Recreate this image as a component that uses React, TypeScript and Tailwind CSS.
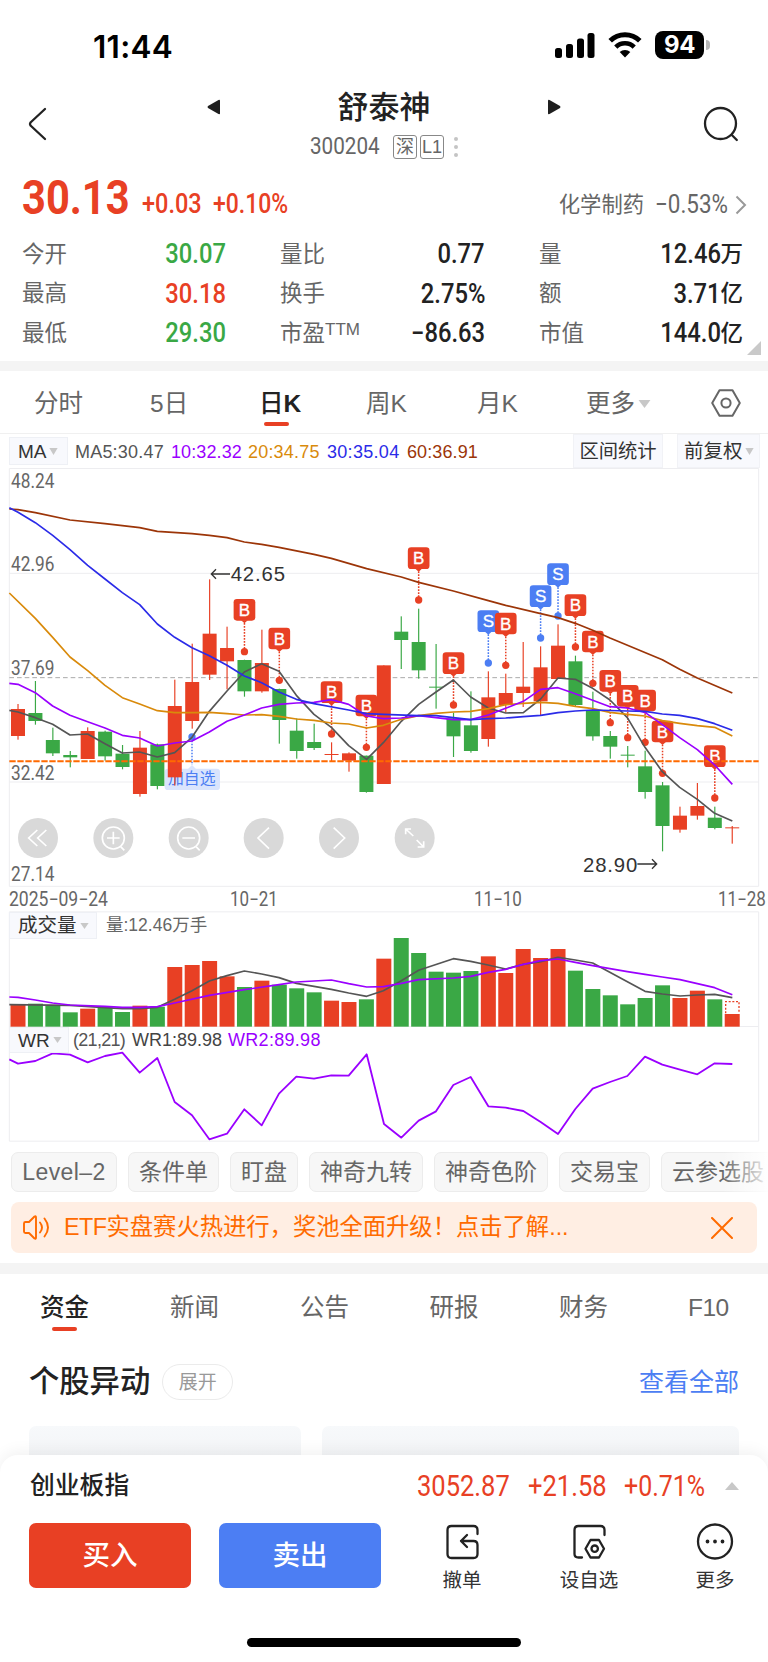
import type { ReactNode } from "react";

const RED = "#e84024";
const GREEN = "#3aa845";
const BLUE = "#4c7ef3";
const GRAY = "#555555";
const PURPLE = "#9a00ff";
const AMBER = "#d98a0b";
const NAVY = "#2b2be8";
const BROWN = "#9c3508";

const CJK = "font-['Liberation_Sans','Noto_Sans_CJK_SC',sans-serif]";
const SVG_SANS = "'Liberation Sans','Noto Sans CJK SC',sans-serif";

const STEP = 52.26;
const cx = (i: number) => 54 + STEP * i;

// high, body top, body bottom, low, 1 = rising
const candles: number[][] = [
  [732, 747, 828, 839, 1], [663, 759, 783, 794, 0], [803, 840, 880, 888, 0], [873, 885, 892, 922, 0],
  [802, 813, 897, 897, 1], [812, 815, 889, 902, 0], [855, 881, 921, 928, 0], [813, 863, 1002, 1010, 1],
  [851, 853, 978, 988, 0], [659, 738, 952, 977, 1], [551, 666, 783, 806, 1], [358, 521, 644, 660, 1],
  [500, 564, 604, 688, 1], [599, 600, 694, 710, 0], [509, 609, 694, 698, 1], [686, 687, 780, 851, 0],
  [775, 812, 873, 896, 0], [791, 846, 864, 870, 0], [847, 882, 885, 903, 1], [877, 880, 902, 935, 1],
  [887, 887, 996, 998, 0], [616, 616, 972, 972, 1], [469, 515, 540, 627, 0], [446, 546, 631, 656, 0],
  [552, 680, 683, 746, 0], [758, 775, 829, 891, 0], [694, 796, 873, 878, 0], [634, 712, 837, 860, 1],
  [641, 699, 735, 757, 1], [546, 680, 699, 741, 1], [559, 622, 724, 767, 1], [493, 557, 657, 657, 1],
  [587, 604, 735, 738, 0], [695, 752, 829, 842, 0], [813, 828, 860, 896, 0], [858, 884, 887, 922, 0],
  [872, 919, 996, 1016, 0], [966, 976, 1098, 1174, 0], [1040, 1067, 1109, 1118, 1], [969, 1038, 1067, 1079, 1],
  [1040, 1073, 1104, 1108, 0], [1098, 1102, 1105, 1151, 1],
];

const volumes = [
  375, 371, 377, 397, 386, 382, 396, 377, 380, 261, 255, 243, 289, 321, 302, 314, 325, 337, 362, 366, 358,
  236, 174, 219, 275, 278, 273, 229, 279, 207, 234, 207, 272, 327, 346, 373, 354, 316, 354, 332, 358, 402,
];

const trades: [number, number, "B" | "S"][] = [
  [13, 417, "B"], [15, 503, "B"], [18, 664, "B"], [20, 704, "B"], [23, 262, "B"], [25, 577, "B"],
  [27, 451, "S"], [28, 458, "B"], [30, 376, "S"], [31, 310, "S"], [32, 403, "B"], [33, 512, "B"],
  [34, 630, "B"], [35, 675, "B"], [36, 689, "B"], [37, 782, "B"], [40, 856, "B"],
];

const MA60 = "28,147 54,149 106,158 210,180 315,191 419,203 472,214 576,221 628,226 681,233 733,246 785,253 837,262 942,283 994,295 1100,326 1204,351 1256,367 1360,393 1465,422 1517,436 1622,461 1674,473 1726,490 1778,511 1830,534 1987,599 2039,628 2092,654 2197,699";
const MA30 = "28,143 54,157 106,188 158,226 210,269 263,316 315,357 367,398 419,434 472,492 524,532 576,563 628,587 681,616 733,648 785,668 837,696 889,718 942,731 1046,750 1100,761 1150,763 1256,767 1308,767 1360,773 1412,779 1465,776 1517,774 1570,770 1622,766 1674,758 1726,753 1778,750 1882,753 1935,754 1987,762 2039,766 2092,776 2144,791 2197,811";
const MA20 = "28,399 106,475 158,532 210,591 263,632 315,676 367,713 419,732 472,752 524,758 576,758 628,757 681,761 733,765 785,764 837,769 889,777 942,781 994,789 1046,792 1100,804 1150,796 1204,778 1256,767 1308,760 1360,756 1412,754 1465,746 1517,734 1570,730 1622,727 1674,730 1726,739 1778,746 1830,757 1882,763 1935,768 1987,782 2039,790 2092,797 2144,802 2197,828";
const MA10 = "28,670 54,673 106,698 158,738 210,766 263,785 315,804 367,826 419,834 472,858 524,849 576,843 628,816 681,784 733,765 785,744 837,733 889,729 942,727 994,719 1046,733 1100,768 1150,776 1204,774 1256,767 1308,773 1360,779 1412,779 1465,765 1517,745 1570,724 1622,688 1674,683 1726,701 1778,721 1830,740 1882,744 1935,757 1987,794 2039,833 2092,869 2144,915 2197,973";
const MA5 = "28,751 54,756 106,773 158,793 210,825 263,822 315,851 367,879 419,876 472,891 524,878 576,832 628,754 681,693 733,636 785,611 837,634 889,706 942,763 994,802 1046,857 1100,898 1150,848 1204,784 1256,733 1308,696 1360,660 1412,711 1465,744 1517,759 1570,758 1622,717 1674,654 1726,658 1778,685 1830,720 1882,773 1935,862 1987,935 2039,982 2092,1018 2144,1060 2197,1083";
const VMA5 = "28,374 210,376 315,383 367,386 419,386 472,382 524,358 576,332 628,303 681,287 733,273 785,282 837,293 889,310 942,319 994,328 1046,339 1100,349 1150,332 1204,302 1256,271 1360,236 1412,244 1464,255 1517,267 1570,253 1622,245 1674,232 1726,240 1778,249 1935,334 1987,342 2040,348 2092,345 2144,343 2197,353";
const VMA10 = "28,351 54,352 106,360 158,369 210,375 315,379 367,382 419,382 472,380 524,369 628,346 733,329 837,314 889,306 942,303 994,300 1046,311 1100,321 1150,320 1204,310 1256,299 1360,294 1412,289 1465,277 1517,268 1570,253 1622,242 1674,237 1726,247 1778,257 1830,266 1882,275 1935,283 1987,291 2040,299 2092,311 2144,323 2197,344";
const WR = "28,538 54,551 106,543 158,520 210,524 263,547 315,528 367,518 419,578 472,534 524,666 576,706 628,778 681,761 733,688 785,736 837,641 889,590 942,596 994,586 1046,587 1100,523 1152,732 1204,773 1256,722 1308,694 1360,615 1412,591 1465,679 1517,683 1570,693 1622,726 1674,762 1726,687 1778,626 1830,606 1882,588 1935,530 1987,554 2040,569 2092,583 2144,550 2197,552";

function Line({ points, color, width = 5 }: { points: string; color: string; width?: number }) {
  return <polyline points={points} fill="none" stroke={color} strokeWidth={width} strokeLinejoin="round" />;
}

function Caret({ className = "" }: { className?: string }) {
  return (
    <svg className={className} viewBox="0 0 12 8" fill="#c8c8c8" preserveAspectRatio="none">
      <path d="M0.5 0h11L6 8z" />
    </svg>
  );
}

function Num({ children, className = "", scale = "scale-x-[0.88]" }: { children: ReactNode; className?: string; scale?: string }) {
  return (
    <span className={`inline-block whitespace-nowrap font-['Roboto',sans-serif] leading-none ${scale} ${className}`}>
      {children}
    </span>
  );
}

function StatusBar() {
  return (
    <div className="flex h-[90px] items-start justify-between pl-[93px] pr-[58px]">
      <span className="pt-[31px] font-['Inter',sans-serif] text-[31.500px] font-semibold leading-[31px] tracking-[0.3px] text-black">11:44</span>
      <div className="flex pt-[31px]">
        <svg className="h-7 w-[40px]" viewBox="0 0 40 28">
          <rect x="0" y="17" width="7" height="10" rx="2.5" />
          <rect x="11" y="13" width="7" height="14" rx="2.5" />
          <rect x="22" y="7.500" width="7" height="19.500" rx="2.5" />
          <rect x="32.500" y="2" width="7" height="25" rx="2.5" />
        </svg>
        <svg className="ml-[13px] h-7 w-[34px]" viewBox="0 0 34 28">
          <path d="M2.200 9.800a21 21 0 0 1 29.600 0" fill="none" stroke="#000" strokeWidth="5" />
          <path d="M7.800 16a13 13 0 0 1 18.400 0" fill="none" stroke="#000" strokeWidth="4.600" />
          <path d="M17 26.500l-5.300-5.400a7.500 7.500 0 0 1 10.600 0z" />
        </svg>
        <div className="ml-[13.500px] flex h-7 w-[49px] items-center justify-center rounded-[8px] bg-black font-['Inter',sans-serif] text-[24px] font-bold leading-none tracking-[-0.5px] text-white">
          94
        </div>
        <div className="ml-[2px] mt-[9px] h-[10px] w-[4px] rounded-r-full bg-[#b5b5b5]" />
      </div>
    </div>
  );
}

function Header() {
  return (
    <div className="flex h-[83px] items-start justify-between pl-[28px] pr-[29px]">
      <svg className="mt-[17px] h-[34px] w-[20px]" viewBox="0 0 20 34" fill="none" stroke="#222" strokeWidth="2.300" strokeLinecap="round" strokeLinejoin="round">
        <path d="M17 2L2.500 15.500q-1 1.500 0 3L17 32" />
      </svg>
      <div className="ml-[17px] flex w-[354px] flex-col">
        <div className="flex h-[34px] items-center justify-between">
          <svg className="h-4 w-[14px]" viewBox="0 0 14 16" fill="#1f1f1f"><path d="M13 1.500v13q0 1-1.500.5L1 9q-1-1 0-2L11.500.9Q13 .5 13 1.500z" /></svg>
          <h1 className="text-[31px] font-medium leading-none text-[#222]">舒泰神</h1>
          <svg className="h-4 w-[14px]" viewBox="0 0 14 16" fill="#1f1f1f"><path d="M1 1.500v13q0 1 1.500.5L13 9q1-1 0-2L2.500.9Q1 .5 1 1.500z" /></svg>
        </div>
        <div className="mt-[11px] flex h-6 items-center pl-[103px] text-[#666]">
          <Num className="w-[83px] origin-left text-[23.500px]">300204</Num>
          <span className="flex size-[24px] items-center justify-center rounded-[3px] border border-[#888] text-[18px] leading-none">深</span>
          <span className="ml-[3px] flex size-[24px] items-center justify-center rounded-[3px] border border-[#888] text-[18px] leading-none">L1</span>
          <span className="ml-[10px] flex flex-col gap-1">
            <i className="size-1 rounded-full bg-[#c4c4c4]" />
            <i className="size-1 rounded-full bg-[#c4c4c4]" />
            <i className="size-1 rounded-full bg-[#c4c4c4]" />
          </span>
        </div>
      </div>
      <svg className="mt-[16px] h-[36px] w-[36px]" viewBox="0 0 36 36" fill="none" stroke="#222" strokeWidth="2.300" strokeLinecap="round">
        <circle cx="17.500" cy="17.500" r="15.500" />
        <path d="M28.800 29l5 5" />
      </svg>
    </div>
  );
}

const UP = "text-[#e84024]";
const DOWN = "text-[#3aa845]";
const INK = "text-[#222]";
const quoteRows: [string, string, string, string, string, string, string, string][] = [
  ["今开", "30.07", DOWN, "量比", "0.77", "量", "12.46", "万"],
  ["最高", "30.18", UP, "换手", "2.75%", "额", "3.71", "亿"],
  ["最低", "29.30", DOWN, "市盈", "−86.63", "市值", "144.0", "亿"],
];

function Quote() {
  return (
    <section className="relative h-[188px]">
      <div className="flex h-[61px] items-end pl-[22px] pr-[21px]">
        <Num scale="scale-x-[0.85]" className="mb-[12px] w-[120px] origin-left text-[49px] font-bold text-[#e84024]">30.13</Num>
        <Num scale="scale-x-[0.87]" className="mb-[16px] w-[71px] origin-left text-[27px] font-medium text-[#e84024]">+0.03</Num>
        <Num scale="scale-x-[0.85]" className="mb-[16px] origin-left text-[27px] font-medium text-[#e84024]">+0.10%</Num>
        <div className="mb-[15px] ml-auto flex items-center text-[#666]">
          <span className="text-[21.300px] leading-[28px]">化学制药</span>
          <Num className="ml-[11px] w-[70px] origin-left text-[25.500px]">−0.53%</Num>
          <svg className="ml-[10px] h-5 w-[12px]" viewBox="0 0 12 20" fill="none" stroke="#999" strokeWidth="2"><path d="M1.500 1.500L10 10l-8.500 8.500" /></svg>
        </div>
      </div>
      <div className="pl-[22px] pr-[26px] pt-px">
        {quoteRows.map((r) => (
          <div key={r[0]} className="grid h-[39.500px] grid-cols-[204px_54px_205px_54px_204px] items-center text-[22.500px] leading-none text-[#666]">
            <div className="flex items-center justify-between">
              <span>{r[0]}</span>
              <Num className={`origin-right text-[27px] font-medium ${r[2]}`}>{r[1]}</Num>
            </div>
            <span />
            <div className="flex items-center justify-between">
              <span className="flex">
                {r[3]}
                {r[3] === "市盈" && <span className="-mt-[2px] text-[17px] leading-none">TTM</span>}
              </span>
              <Num className={`origin-right text-[27px] font-medium ${INK}`}>{r[4]}</Num>
            </div>
            <span />
            <div className="flex items-center justify-between">
              <span>{r[5]}</span>
              <span className="flex items-center font-medium text-[#222]">
                <Num className="origin-right text-[27px] font-medium">{r[6]}</Num>
                {r[7]}
              </span>
            </div>
          </div>
        ))}
      </div>
      <svg className="absolute bottom-[6px] right-[7px] size-[14px]" viewBox="0 0 14 14" fill="#c9c9c9"><path d="M14 0v14H0z" /></svg>
    </section>
  );
}

function PeriodTabs() {
  return (
    <nav className="flex h-[63px] items-center border-b border-[#f0f0f0] pl-[34px] pt-[4px] text-[24.500px] leading-[30px] text-[#666]">
      <span className="w-[116px]">分时</span>
      <span className="w-[109px]">5日</span>
      <span className="relative w-[107px] font-medium text-[#222]">
        日<b>K</b>
        <i className="absolute left-[5px] top-[33px] h-1 w-[25px] rounded-full bg-[#e84024]" />
      </span>
      <span className="w-[111px]">周K</span>
      <span className="w-[109px]">月K</span>
      <span>更多</span>
      <Caret className="ml-[3px] h-[8px] w-[13px]" />
      <svg className="mb-[2px] ml-[60px] h-[28px] w-[30px]" viewBox="0 0 30 28" fill="none" stroke="#666" strokeWidth="2" strokeLinejoin="round">
        <path d="M8.500 1.200h13L28.800 14l-7.300 12.800h-13L1.200 14z" />
        <circle cx="15" cy="14" r="4.600" />
      </svg>
    </nav>
  );
}

function MaBar() {
  return (
    <div className="flex h-[34px] items-center pl-[9px] pr-[8px] text-[18px] leading-none">
      <div className="flex h-[28px] w-[59px] items-center border border-[#eef0f5] bg-[#f8f9fd] pl-[8px] text-[19px] text-[#333]">
        MA
        <Caret className="ml-[2px] h-[7px] w-[9px]" />
      </div>
      <span className="ml-[7px] w-[96px] whitespace-nowrap pt-px tracking-[0.2px] text-[#555]">MA5:30.47</span>
      <span className="w-[77px] pt-px tracking-[0.1px] text-[#9a00ff]">10:32.32</span>
      <span className="w-[79px] pt-px tracking-[0.2px] text-[#d98a0b]">20:34.75</span>
      <span className="w-[80px] pt-px tracking-[0.3px] text-[#2b2be8]">30:35.04</span>
      <span className="pt-px tracking-[0.1px] text-[#9c3508]">60:36.91</span>
      <div className="ml-auto flex h-[34px] w-[90px] items-center justify-center border border-[#f1f2f6] bg-[#f8f9fd] pt-px text-[19.300px] text-[#333]">区间统计</div>
      <div className="ml-[14px] flex h-[34px] w-[83px] items-center border border-[#f1f2f6] bg-[#f8f9fd] pl-[6px] pt-px text-[19.500px] text-[#333]">
        前复权
        <Caret className="ml-[2px] h-[7px] w-[9px]" />
      </div>
    </div>
  );
}

function AxisLabel({ x, y, w, children }: { x: number; y: number; w: number; children: string }) {
  return (
    <text x={x} y={y} textLength={w} lengthAdjust="spacingAndGlyphs" fontSize="58" fontFamily="Roboto, sans-serif" fill="#666">
      {children}
    </text>
  );
}

function TradeTag({ i, top, kind }: { i: number; top: number; kind: "B" | "S" }) {
  const x = cx(i);
  const c = kind === "B" ? RED : BLUE;
  return (
    <g>
      <rect x={x - 32.5} y={top} width="65" height="65" rx="10" fill={c} />
      <path d={`M${x - 10} ${top + 64}h20l-10 9z`} fill={c} />
      <line x1={x} x2={x} y1={top + 72} y2={top + 150} stroke={c} strokeWidth="4.500" strokeDasharray="5 4" />
      <circle cx={x} cy={top + 158} r="11" fill={c} />
      <text x={x} y={top + 51} textAnchor="middle" fontSize="51" fontFamily={SVG_SANS} fill="#fff" stroke="#fff" strokeWidth="1">{kind}</text>
    </g>
  );
}

function PriceChart() {
  return (
    <svg className="block h-[419px] w-[768px]" viewBox="0 24 2304 1257">
      <path d="M28 25.500H2276V1279H28zM28 340H2276M28 966H2276" fill="none" stroke="#ededf0" strokeWidth="3" />
      <path d="M28 653H2276" stroke="#aaa" strokeWidth="3" strokeDasharray="14 9" />
      <AxisLabel x={33} y={83} w={130}>48.24</AxisLabel>
      <AxisLabel x={33} y={332} w={130}>42.96</AxisLabel>
      <AxisLabel x={33} y={645} w={130}>37.69</AxisLabel>
      <AxisLabel x={33} y={959} w={130}>32.42</AxisLabel>
      <AxisLabel x={33} y={1263} w={130}>27.14</AxisLabel>

      <rect x="494" y="926" width="166" height="64" rx="10" fill="#d9e4fd" />
      <path d="M564 927l12-12 12 12z" fill="#d9e4fd" />
      <text x="504" y="972" fontSize="47.500" fontFamily={SVG_SANS} fill={BLUE}>加自选</text>

      {candles.map(([h, t, b, l, up], i) => (
        <g key={i} fill={up ? RED : GREEN}>
          <rect x={cx(i) - 1.7} y={h} width="3.500" height={l - h} />
          <rect x={cx(i) - 21} y={t} width="42" height={b - t} />
        </g>
      ))}

      <circle cx="576" cy="831" r="11" fill={BLUE} />
      <path d="M576 842V915" stroke={BLUE} strokeWidth="4.500" strokeDasharray="5 4" />

      {trades.map(([i, top, kind]) => (
        <TradeTag key={i} i={i} top={top} kind={kind} />
      ))}

      <path d="M28 903.500H2276" stroke="#ff6a00" strokeWidth="6" strokeDasharray="19 5" />
      <Line points={MA60} color={BROWN} />
      <Line points={MA5} color={GRAY} />
      <Line points={MA20} color={AMBER} />
      <Line points={MA10} color={PURPLE} />
      <Line points={MA30} color={NAVY} />

      <g fontSize="61" fontFamily={SVG_SANS} fill="#333">
        <text x="692" y="364" textLength="163">42.65</text>
        <text x="1749" y="1235" textLength="163">28.90</text>
      </g>
      <path d="M690 342H634M648 328l-14 14 14 14M1912 1212H1970M1956 1198l14 14-14 14" fill="none" stroke="#333" strokeWidth="4" />

      <g fill="#d9d9d9">
        {[114, 340, 566, 791, 1017, 1244].map((x) => (
          <circle key={x} cx={x} cy="1134" r="60" />
        ))}
      </g>
      <g fill="none" stroke="#fff" strokeWidth="5">
        <path d="M112 1110L86 1134l26 24M139 1110L113 1134l26 24" />
        <circle cx="340" cy="1134" r="33" />
        <path d="M340 1115V1153M321 1134H359M362 1160l11 11" />
        <circle cx="566" cy="1134" r="33" />
        <path d="M547 1134H585M588 1160l11 11" />
        <path d="M807 1103L774 1134l33 32M1001 1103L1034 1134l-33 32" />
        <path d="M1217 1123V1107H1233M1217 1107L1240 1128M1250 1140L1271 1161M1271 1144V1161H1253" />
      </g>
    </svg>
  );
}

function DateAxis() {
  return (
    <div className="flex h-[24px] items-center pl-[9px] pt-[2px] font-['Roboto',sans-serif] text-[19.500px] leading-none text-[#666]">
      <span className="w-[221px] origin-left scale-x-[0.9] whitespace-nowrap">2025−09−24</span>
      <span className="w-[244px] origin-left scale-x-[0.87] whitespace-nowrap">10−21</span>
      <span className="w-[243.500px] origin-left scale-x-[0.87] whitespace-nowrap">11−10</span>
      <span className="w-[46px] origin-left scale-x-[0.87] whitespace-nowrap">11−28</span>
    </div>
  );
}

function VolumePanel() {
  return (
    <div className="relative h-[116px]">
      <svg className="block h-[116px] w-[768px]" viewBox="0 93 2304 348">
        <path d="M28 441V95.500H2276V441M28 439.500H2276" fill="none" stroke="#ededf0" strokeWidth="3" />
        {volumes.map((t, i) => (
          <rect key={i} x={cx(i) - 22.5} y={t} width="45" height={440 - t} fill={candles[i][4] ? RED : GREEN} />
        ))}
        <path d="M2177 400V365H2217V400" fill="#fff" stroke={RED} strokeWidth="4" strokeDasharray="6 5" />
        <Line points={VMA5} color={GRAY} />
        <Line points={VMA10} color={PURPLE} />
      </svg>
      <div className="absolute left-[9px] top-[1px] flex h-[27px] items-center leading-none">
        <div className="flex h-[27px] w-[88px] items-center border border-[#eef0f5] bg-[#f8f9fd] pl-[8px] text-[19.500px] text-[#333]">
          成交量
          <Caret className="ml-[3px] h-[6px] w-[9px]" />
        </div>
        <span className="ml-[9px] text-[17.500px] text-[#666]">量:12.46万手</span>
      </div>
    </div>
  );
}

function WrPanel() {
  return (
    <div className="relative h-[115px]">
      <svg className="block h-[115px] w-[768px]" viewBox="0 441 2304 345">
        <path d="M28 441V783.500H2276V441" fill="none" stroke="#ededf0" strokeWidth="3" />
        <Line points={WR} color={PURPLE} width={5.5} />
      </svg>
      <div className="absolute left-[9px] top-0 flex h-[26px] items-center whitespace-nowrap text-[18px] leading-none">
        <div className="flex h-[26px] w-[60px] items-center border border-[#eef0f5] bg-[#f8f9fd] pl-[8px] text-[19px] text-[#333]">
          WR
          <Caret className="ml-[3px] h-[6px] w-[9px]" />
        </div>
        <span className="ml-[4px] w-[59px] tracking-[-0.7px] text-[#555]">(21,21)</span>
        <span className="w-[96px] text-[#444]">WR1:89.98</span>
        <span className="tracking-[0.3px] text-[#9a00ff]">WR2:89.98</span>
      </div>
    </div>
  );
}

function Chips() {
  const items = ["条件单", "盯盘", "神奇九转", "神奇色阶", "交易宝", "云参选股"];
  return (
    <div className="relative flex h-[60px] gap-[11px] overflow-hidden pl-[11px] pt-[10px] text-[23px] leading-none text-[#666]">
      <span className="flex h-10 w-[106px] shrink-0 items-center justify-center rounded-[7px] border border-[#ececec] bg-[#f7f7f7] tracking-[0.4px]">Level–2</span>
      {items.map((t) => (
        <span key={t} className="flex h-10 shrink-0 items-center rounded-[7px] border border-[#ececec] bg-[#f7f7f7] px-[10px]">
          {t}
        </span>
      ))}
      <div className="absolute right-0 top-0 h-full w-[46px] bg-gradient-to-r from-white/0 to-white/90" />
    </div>
  );
}

function Notice() {
  return (
    <div className="mx-[11px] flex h-[51px] items-center rounded-[8px] bg-[#ffeee3] pl-[11px] pr-[24px] text-[#ff6b00]">
      <svg className="h-[27px] w-[28px]" viewBox="0 0 28 27" fill="none" stroke="#ff6b00" strokeWidth="1.900" strokeLinejoin="round" strokeLinecap="round">
        <path d="M2 9.500q0-1.500 1.500-1.500H7L12.500 2.500q1.500-.8 1.500 1v20q0 1.800-1.500 1L7 19H3.500Q2 19 2 17.500z" />
        <path d="M18 8.500q4 5 0 10M22.500 4.500q7 9 0 18" />
      </svg>
      <span className="ml-[14px] whitespace-nowrap pt-px text-[23.300px] leading-none">
        <span className="tracking-[-0.500px]">ETF</span>实盘赛火热进行，奖池全面升级！点击了解...
      </span>
      <svg className="ml-auto size-[22px]" viewBox="0 0 22 22" stroke="#ff6b00" strokeWidth="2" strokeLinecap="round"><path d="M1 1l20 20M21 1L1 21" /></svg>
    </div>
  );
}

function NewsSection() {
  return (
    <section className="h-[181px]">
      <nav className="flex h-[66px] items-center pl-[40px] pt-px text-[24.500px] leading-[30px] text-[#666]">
        <span className="relative w-[130px] font-medium text-[#222]">
          资金
          <i className="absolute left-[12px] top-[34px] h-1 w-[25px] rounded-full bg-[#e84024]" />
        </span>
        <span className="w-[130px]">新闻</span>
        <span className="w-[129.500px]">公告</span>
        <span className="w-[129.500px]">研报</span>
        <span className="w-[129px]">财务</span>
        <span className="tracking-[-0.500px]">F10</span>
      </nav>
      <div className="flex h-[86px] items-center pb-[2px] pl-[29px] pr-[29px]">
        <h2 className="text-[30.300px] font-medium leading-none text-[#222]">个股异动</h2>
        <span className="ml-[12px] flex h-9 w-[71px] items-center justify-center rounded-full border border-[#ebebeb] text-[19px] leading-none text-[#999]">展开</span>
        <span className="ml-auto text-[25px] leading-none text-[#4c7ef3]">查看全部</span>
      </div>
      <div className="flex gap-[21px] px-[29px]">
        <div className="h-[50px] w-[272px] rounded-t-[7px] bg-gradient-to-b from-[#f7f9fb] to-[#f1f2f4]" />
        <div className="h-[50px] flex-1 rounded-t-[7px] bg-gradient-to-b from-[#f7f9fb] to-[#f1f2f4]" />
      </div>
    </section>
  );
}

function Action({ label, children, className }: { label: string; children: ReactNode; className: string }) {
  return (
    <div className={`flex flex-col items-center ${className}`}>
      <svg className="size-[38px]" viewBox="0 0 38 38" fill="none" stroke="#222" strokeWidth="2.300" strokeLinecap="round" strokeLinejoin="round">
        {children}
      </svg>
      <span className="mt-[10px] text-[19.500px] leading-none text-[#333]">{label}</span>
    </div>
  );
}

function BottomSheet() {
  return (
    <footer className="relative h-[207px] rounded-t-[18px] bg-white shadow-[0_-3px_16px_rgba(0,0,0,0.06)]">
      <div className="flex h-[61px] items-center pl-[30px] pr-[29px] pt-px text-[#e84024]">
        <span className="text-[24.800px] font-medium leading-none text-[#222]">创业板指</span>
        <div className="ml-auto flex items-center">
          <Num className="w-[111px] origin-left text-[29px]">3052.87</Num>
          <Num className="w-[96px] origin-left text-[29px]">+21.58</Num>
          <Num scale="scale-x-[0.86]" className="w-[101px] origin-left text-[29px]">+0.71%</Num>
          <svg className="h-[8px] w-[14px]" viewBox="0 0 14 8" fill="#c8c8c8"><path d="M0 8L7 0l7 8z" /></svg>
        </div>
      </div>
      <div className="flex pl-[29px] pt-[7px]">
        <button className="h-[65px] w-[162px] rounded-[7px] bg-[#e84024] pt-px text-[27.500px] font-medium leading-none text-white">买入</button>
        <button className="ml-[28px] h-[65px] w-[162px] rounded-[7px] bg-[#4c7ef3] pt-px text-[27.500px] font-medium leading-none text-white">卖出</button>
        <Action label="撤单" className="ml-[51px] w-[60px]">
          <path d="M34.500 11V7q0-4-4-4h-22q-4 0-4 4v24q0 4 4 4h22q4 0 4-4V22q0-4-4-4H18M24 12l-6 6 6 6" />
        </Action>
        <Action label="设自选" className="ml-[67px] w-[60px]">
          <path d="M34.500 12V7q0-4-4-4h-22q-4 0-4 4v24q0 3.500 4 3.500H12" />
          <path d="M20.500 17h8.500L34 25.700l-5 8.800h-8.500L15.500 25.700z" />
          <circle cx="24.700" cy="25.700" r="3.200" />
        </Action>
        <Action label="更多" className="ml-[66px] w-[60px]">
          <circle cx="19" cy="18.500" r="17" />
          <path d="M11.500 18.500h.01M19 18.500h.01M26.500 18.500h.01" strokeWidth="3.800" />
        </Action>
      </div>
      <div className="mx-auto mt-[47px] h-[9px] w-[274px] rounded-full bg-black" />
    </footer>
  );
}

export default function App() {
  return (
    <div className={`h-[1662px] w-[768px] overflow-hidden bg-white ${CJK}`}>
      <StatusBar />
      <Header />
      <Quote />
      <div className="h-[10px] bg-[#f4f4f4]" />
      <PeriodTabs />
      <MaBar />
      <PriceChart />
      <DateAxis />
      <VolumePanel />
      <WrPanel />
      <Chips />
      <Notice />
      <div className="mt-[10px] h-[11px] bg-[#f4f4f4]" />
      <NewsSection />
      <BottomSheet />
    </div>
  );
}
